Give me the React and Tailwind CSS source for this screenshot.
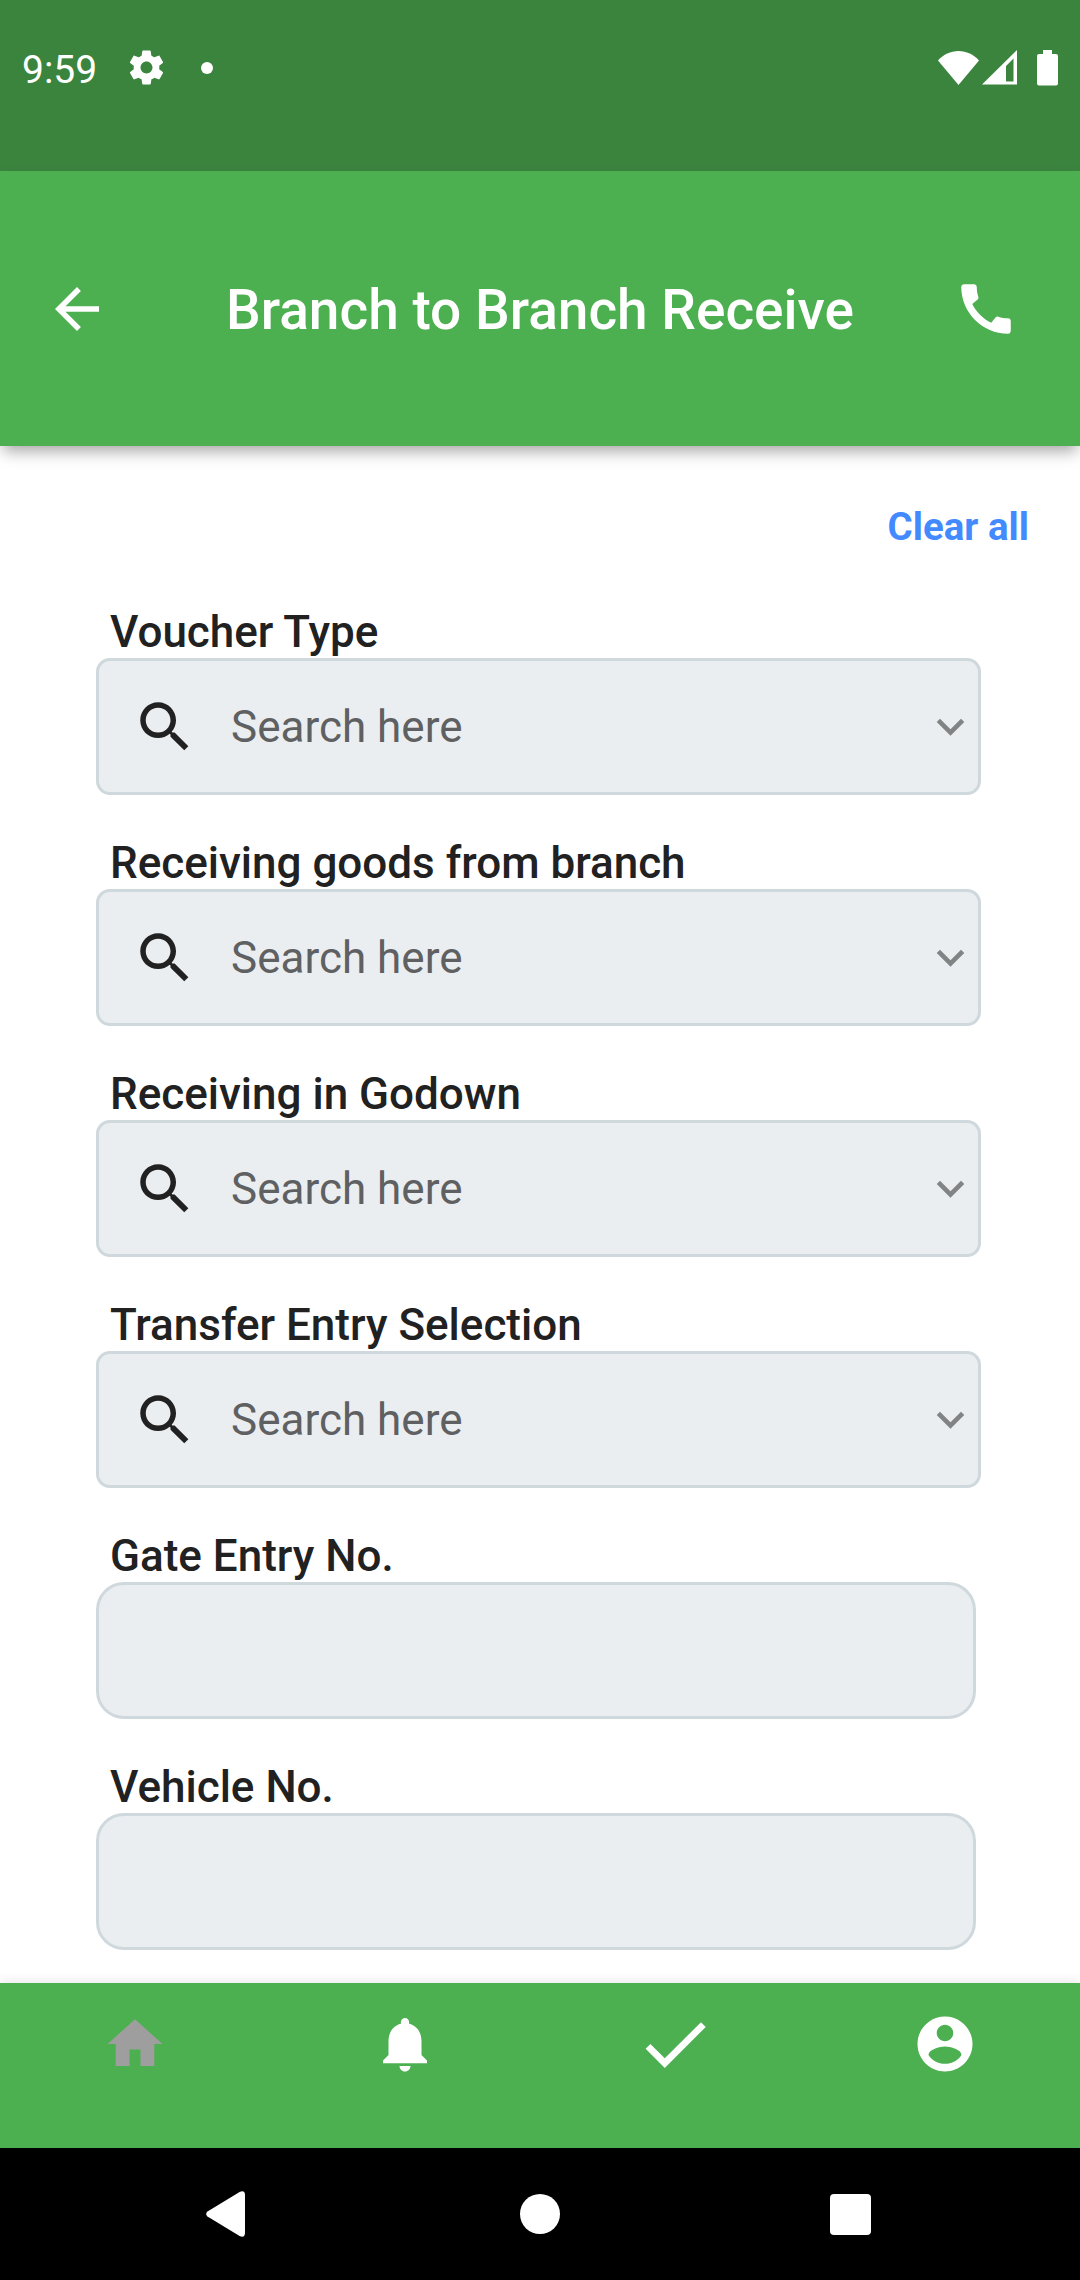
const SEARCH_FIELDS = [
  'Voucher Type',
  'Receiving goods from branch',
  'Receiving in Godown',
  'Transfer Entry Selection',
];
const TEXT_FIELDS = ['Gate Entry No.', 'Vehicle No.'];

const PATHS = {
  settings:
    'M19.43 12.98c.04-.32.07-.64.07-.98s-.03-.66-.07-.98l2.11-1.65c.19-.15.24-.42.12-.64l-2-3.46c-.12-.22-.39-.3-.61-.22l-2.49 1c-.52-.4-1.08-.73-1.69-.98l-.38-2.65C14.46 2.18 14.25 2 14 2h-4c-.25 0-.46.18-.49.42l-.38 2.65c-.61.25-1.17.59-1.69.98l-2.49-1c-.23-.09-.49 0-.61.22l-2 3.46c-.13.22-.07.49.12.64l2.11 1.65c-.04.32-.07.65-.07.98s.03.66.07.98l-2.11 1.65c-.19.15-.24.42-.12.64l2 3.46c.12.22.39.3.61.22l2.49-1c.52.4 1.08.73 1.69.98l.38 2.65c.03.24.24.42.49.42h4c.25 0 .46-.18.49-.42l.38-2.65c.61-.25 1.17-.59 1.69-.98l2.49 1c.23.09.49 0 .61-.22l2-3.46c.12-.22.07-.49-.12-.64l-2.11-1.65zM12 15.5c-1.93 0-3.5-1.57-3.5-3.5s1.57-3.5 3.5-3.5 3.5 1.57 3.5 3.5-1.57 3.5-3.5 3.5z',
  back: 'M20 11H7.83l5.59-5.59L12 4l-8 8 8 8 1.41-1.41L7.83 13H20v-2z',
  phone:
    'M20.01 15.38c-1.23 0-2.42-.2-3.53-.56-.35-.12-.74-.03-1.01.24l-1.57 1.97c-2.83-1.35-5.48-3.9-6.89-6.83l1.95-1.66c.27-.28.35-.67.24-1.02-.37-1.11-.56-2.3-.56-3.53 0-.54-.45-.99-.99-.99H4.19C3.65 3 3 3.24 3 3.99 3 13.28 10.73 21 20.01 21c.71 0 .99-.63.99-1.18v-3.45c0-.54-.45-.99-.99-.99z',
  search:
    'M15.5 14h-.79l-.28-.27C15.41 12.59 16 11.11 16 9.5 16 5.91 13.09 3 9.5 3S3 5.91 3 9.5 5.91 16 9.5 16c1.61 0 3.09-.59 4.23-1.57l.27.28v.79l5 4.99L20.49 19l-4.99-5zm-6 0C7.01 14 5 11.99 5 9.5S7.01 5 9.5 5 14 7.01 14 9.5 11.99 14 9.5 14z',
  expand: 'M16.59 8.59L12 13.17 7.41 8.59 6 10l6 6 6-6z',
  home: 'M10 20v-6h4v6h5v-8h3L12 3 2 12h3v8z',
  bell: 'M12 22c1.1 0 2-.9 2-2h-4c0 1.1.89 2 2 2zm6-6v-5c0-3.07-1.64-5.64-4.5-6.32V4c0-.83-.67-1.5-1.5-1.5s-1.5.67-1.5 1.5v.68C7.63 5.36 6 7.92 6 11v5l-2 2v1h16v-1l-2-2z',
  check: 'M9 16.2L4.8 12l-1.4 1.4L9 19 21 7l-1.4-1.4L9 16.2z',
  account:
    'M12 2C6.48 2 2 6.48 2 12s4.48 10 10 10 10-4.48 10-10S17.52 2 12 2zm0 3c1.66 0 3 1.34 3 3s-1.34 3-3 3-3-1.34-3-3 1.34-3 3-3zm0 14.2c-2.5 0-4.71-1.28-6-3.22.03-1.99 4-3.08 6-3.08 1.99 0 5.97 1.09 6 3.08-1.29 1.94-3.5 3.22-6 3.22z',
};

function Icon({ name, className }) {
  return (
    <svg viewBox="0 0 24 24" fill="currentColor" className={`shrink-0 ${className}`}>
      <path d={PATHS[name]} />
    </svg>
  );
}

function StatusBar() {
  return (
    <div className="flex h-[171px] items-start justify-between bg-[#3b843e] pl-[22px] pr-[22px] text-white">
      <div className="flex h-[135px] items-center">
        <span className="mt-[6px] w-[75px] text-[39px] leading-none">9:59</span>
        <Icon name="settings" className="ml-[29px] size-[41px]" />
        <span className="ml-[34px] size-[12px] rounded-full bg-white" />
      </div>
      <div className="flex h-[135px] items-center">
        <svg width="41" height="34" viewBox="0 0 41 34" fill="currentColor">
          <path d="M0 9.4C5.5 3.500 12.500 0 20.500 0S35.500 3.500 41 9.400L20.500 34z" />
        </svg>
        <svg width="35" height="35" viewBox="0 0 35 35" fill="currentColor" fillRule="evenodd" className="ml-[3px]">
          <path d="M35 0V34.500H0zM31.500 8.500L24 16V31.500H31.500z" />
        </svg>
        <svg width="21" height="36" viewBox="0 0 21 36" fill="currentColor" className="ml-[20px]">
          <path d="M6 0h9v4h4a2 2 0 0 1 2 2v27.500a2 2 0 0 1-2 2H2a2 2 0 0 1-2-2V6a2 2 0 0 1 2-2h4z" />
        </svg>
      </div>
    </div>
  );
}

function AppBar() {
  return (
    <header className="relative z-10 flex h-[275px] items-center justify-between bg-[#4caf50] pl-[44px] pr-[61px] text-white shadow-[0_8px_15px_-3px_rgba(0,0,0,0.36)]">
      <Icon name="back" className="size-[66px]" />
      <h1 className="ml-[17px] mt-[3px] whitespace-nowrap text-[55px] font-medium leading-[64px]">
        Branch to Branch Receive
      </h1>
      <Icon name="phone" className="size-[66px]" />
    </header>
  );
}

function Label({ children }) {
  return (
    <div className="h-[52px] whitespace-nowrap pl-[14px] text-[44px] font-medium leading-[52px] text-[#212121]">
      {children}
    </div>
  );
}

function SearchField({ label }) {
  return (
    <div className="h-[231px]">
      <Label>{label}</Label>
      <div className="flex h-[137px] w-[885px] items-center rounded-[14px] border-[3px] border-[#cfd8dc] bg-[#eaeef1] pl-[33px]">
        <Icon name="search" className="size-[66px] text-[#212121]" />
        <span className="ml-[33px] flex-1 text-[44px] leading-[52px] text-[#5f6061]">Search here</span>
        <Icon name="expand" className="size-[55px] text-[#828384]" />
      </div>
    </div>
  );
}

function TextField({ label }) {
  return (
    <div className="h-[231px]">
      <Label>{label}</Label>
      <div className="h-[137px] w-[880px] rounded-[28px] border-[3px] border-[#cfd8dc] bg-[#eaeef1]" />
    </div>
  );
}

function BottomNav() {
  return (
    <nav className="relative z-10 grid h-[165px] grid-cols-4 justify-items-center bg-[#4caf50] text-white shadow-[0_0_12px_rgba(0,0,0,0.12)]">
      <div className="flex h-[122px] items-center">
        <Icon name="home" className="size-[66px] text-[#9e9e9e]" />
      </div>
      <div className="flex h-[122px] items-center">
        <Icon name="bell" className="size-[66px]" />
      </div>
      <div className="flex h-[122px] items-center">
        <Icon name="check" className="size-[82px]" />
      </div>
      <div className="flex h-[122px] items-center">
        <Icon name="account" className="size-[66px]" />
      </div>
    </nav>
  );
}

function SystemNav() {
  return (
    <div className="relative z-20 flex h-[132px] items-center justify-between bg-black pl-[206px] pr-[209px] text-white">
      <svg width="39" height="46" viewBox="0 0 39 46" fill="currentColor">
        <path d="M1.500 20.500L34 .8Q38.900-1.200 39 4V42Q38.900 47 34 45.200L1.500 25.500Q-1.200 23 1.500 20.500z" />
      </svg>
      <span className="ml-[5px] size-[40px] rounded-full bg-white" />
      <span className="size-[41px] rounded-[4px] bg-white" />
    </div>
  );
}

export default function App() {
  return (
    <div className="flex h-[2280px] w-[1080px] flex-col overflow-hidden bg-white font-['Roboto',sans-serif]">
      <StatusBar />
      <AppBar />
      <main className="h-[1537px] overflow-hidden">
        <div className="flex h-[160px] justify-end pr-[51px] pt-[58px]">
          <span className="h-[45px] text-[38.5px] font-bold leading-[45px] text-[#448aff]">Clear all</span>
        </div>
        <div className="pl-[96px]">
          {SEARCH_FIELDS.map((label) => (
            <SearchField key={label} label={label} />
          ))}
          {TEXT_FIELDS.map((label) => (
            <TextField key={label} label={label} />
          ))}
        </div>
      </main>
      <BottomNav />
      <SystemNav />
    </div>
  );
}
